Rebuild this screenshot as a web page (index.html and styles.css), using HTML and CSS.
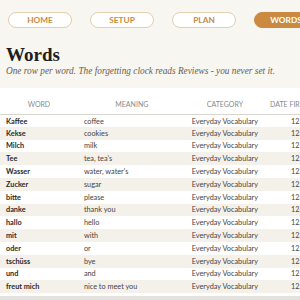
FILE: index.html
```html
<!DOCTYPE html>
<html lang="en">

<head>
  <meta charset="UTF-8">
  <meta name="viewport" content="width=device-width, initial-scale=1.0">
  <title>Words</title>
  <link rel="stylesheet" href="styles.css">
</head>

<body>
  <div class="page">
    <div class="top">
      <nav class="nav">
        <a class="nav-btn">Home</a>
        <a class="nav-btn">Setup</a>
        <a class="nav-btn">Plan</a>
        <a class="nav-btn active">Words</a>
      </nav>
      <h1>Words</h1>
      <p class="sub">One row per word. The forgetting clock reads Reviews - you never set it.</p>
    </div>

    <table class="words">
      <thead>
        <tr>
          <th class="c-word">Word</th>
          <th class="c-meaning">Meaning</th>
          <th class="c-cat">Category</th>
          <th class="c-date">Date First Seen</th>
        </tr>
      </thead>
      <tbody>
        <tr><td class="w">Kaffee</td><td>coffee</td><td>Everyday Vocabulary</td><td class="d">12/03/2024</td></tr>
        <tr><td class="w">Kekse</td><td>cookies</td><td>Everyday Vocabulary</td><td class="d">12/03/2024</td></tr>
        <tr><td class="w">Milch</td><td>milk</td><td>Everyday Vocabulary</td><td class="d">12/03/2024</td></tr>
        <tr><td class="w">Tee</td><td>tea, tea's</td><td>Everyday Vocabulary</td><td class="d">12/03/2024</td></tr>
        <tr><td class="w">Wasser</td><td>water, water's</td><td>Everyday Vocabulary</td><td class="d">12/03/2024</td></tr>
        <tr><td class="w">Zucker</td><td>sugar</td><td>Everyday Vocabulary</td><td class="d">12/03/2024</td></tr>
        <tr><td class="w">bitte</td><td>please</td><td>Everyday Vocabulary</td><td class="d">12/03/2024</td></tr>
        <tr><td class="w">danke</td><td>thank you</td><td>Everyday Vocabulary</td><td class="d">12/03/2024</td></tr>
        <tr><td class="w">hallo</td><td>hello</td><td>Everyday Vocabulary</td><td class="d">12/03/2024</td></tr>
        <tr><td class="w">mit</td><td>with</td><td>Everyday Vocabulary</td><td class="d">12/03/2024</td></tr>
        <tr><td class="w">oder</td><td>or</td><td>Everyday Vocabulary</td><td class="d">12/03/2024</td></tr>
        <tr><td class="w">tschüss</td><td>bye</td><td>Everyday Vocabulary</td><td class="d">12/03/2024</td></tr>
        <tr><td class="w">und</td><td>and</td><td>Everyday Vocabulary</td><td class="d">12/03/2024</td></tr>
        <tr><td class="w">freut mich</td><td>nice to meet you</td><td>Everyday Vocabulary</td><td class="d">12/03/2024</td></tr>
      </tbody>
    </table>
  </div>
  <div class="scrollbar"></div>
</body>

</html>
```

FILE: styles.css
```css
* {
  margin: 0px;
  padding: 0px;
  box-sizing: border-box;
}

html,
body {
  height: 100%;
  overflow: hidden;
}

body {
  background: #ffffff;
  font-family: Lato, 'Open Sans', sans-serif;
  color: #2a2a2a;
  position: relative;
}

.page {
  width: 360px;
}

.top {
  background: #f8f6f1;
  padding: 12px 6px 11px 6px;
}

.nav {
  display: flex;
  gap: 18px;
  padding-left: 2px;
  margin-bottom: 17px;
}

.nav-btn {
  flex: none;
  width: 64px;
  height: 16px;
  border: 1px solid #e3ceaf;
  border-radius: 8px;
  background: #ffffff;
  color: #c98a3e;
  font-size: 8.3px;
  font-weight: bold;
  text-transform: uppercase;
  display: flex;
  align-items: center;
  justify-content: center;
}

.nav-btn.active {
  background: #cb8a3f;
  border-color: #cb8a3f;
  color: #ffffff;
}

h1 {
  font-family: 'Liberation Serif', serif;
  font-size: 19px;
  line-height: 19px;
  color: #1e1e1e;
}

.sub {
  font-family: 'Liberation Serif', serif;
  font-style: italic;
  font-size: 9.3px;
  line-height: 11px;
  margin-top: 2px;
  color: #6a5c4c;
}

.words {
  border-collapse: collapse;
  margin-top: 9px;
  font-size: 7.3px;
}

.words th {
  font-weight: normal;
  text-transform: uppercase;
  color: #8a8a8a;
  font-size: 7px;
  height: 17px;
  padding: 0px 6px 3px 6px;
  border-bottom: 1px solid #d8d5cf;
}

.c-word { width: 78px; }
.c-meaning { width: 108px; }
.c-cat { width: 78px; }
.c-date { width: 96px; white-space: nowrap; }

.words th.c-date {
  text-align: left;
}

.words td {
  height: 12.8px;
  padding: 0px 6px;
  color: #444444;
  white-space: nowrap;
}

.words td.w {
  font-weight: bold;
  color: #2a2a2a;
}

.words td.d {
  padding-left: 27px;
}

.words tbody tr:first-child td {
  padding-top: 1px;
}

.words tbody tr:nth-child(even) {
  background: #f4f1ea;
}

.scrollbar {
  position: absolute;
  left: 0px;
  right: 0px;
  bottom: 0px;
  height: 4px;
  background: #e4e2df;
}
```
